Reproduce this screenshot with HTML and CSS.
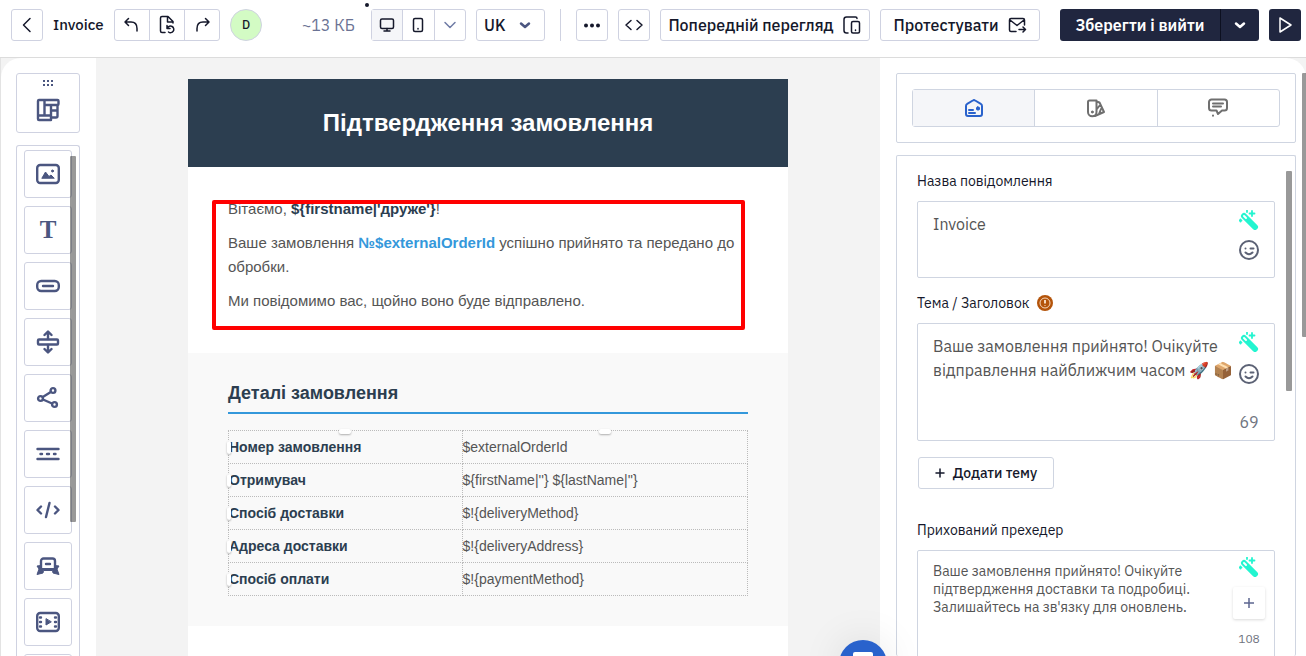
FILE: index.html
```
<!DOCTYPE html>
<html lang="uk">
<head>
  <meta charset="UTF-8">
  <meta name="viewport" content="width=device-width, initial-scale=1">
  <title>Invoice</title>
  <link rel="stylesheet" href="styles.css">
</head>
<body>

<header class="topbar">
  <button class="btn btn-icon" type="button" aria-label="Назад">
    <svg class="icon" viewBox="0 0 20 20"><path d="M13 3.5 6.500 10l6.500 6.500"/></svg>
  </button>
  <h1 class="doc-name">Invoice</h1>

  <div class="btn-group history">
    <button type="button" aria-label="Скасувати">
      <svg class="icon" viewBox="0 0 20 20"><path d="M6.500 3.500 3 7l3.500 3.500M3.500 7H9c4 0 6 2.500 6 6.500V16"/></svg>
    </button>
    <button type="button" aria-label="Версії">
      <svg class="icon" viewBox="0 0 20 20"><path d="M8 17.500H5A1.500 1.500 0 0 1 3.500 16V3A1.500 1.500 0 0 1 5 1.500h6l5 5V8M10.500 2v5H16M10 10.500v3h3M10.500 13a3.300 3.300 0 1 1 1 4"/></svg>
    </button>
    <button type="button" aria-label="Повторити">
      <svg class="icon" viewBox="0 0 20 20"><path d="M13.500 3.500 17 7l-3.500 3.500M16.500 7H11c-4 0-6 2.500-6 6.500V16"/></svg>
    </button>
  </div>

  <span class="avatar">D</span>
  <span class="size">~13 КБ</span>

  <div class="btn-group devices">
    <button class="active" type="button" aria-label="Комп'ютер">
      <svg class="icon icon-sm" viewBox="0 0 16 16"><rect x="1.500" y="2" width="13" height="9.500" rx="1.500"/><path d="M8 11.500V14M5 14h6"/></svg>
    </button>
    <button type="button" aria-label="Телефон">
      <svg class="icon icon-sm" viewBox="0 0 16 16"><rect x="3.500" y="1.500" width="9" height="13" rx="1.500"/><path d="M8 11.500v.5"/></svg>
    </button>
    <button class="muted" type="button" aria-label="Інші пристрої">
      <svg class="icon icon-sm" viewBox="0 0 16 16"><path d="m3 5.500 5 5 5-5"/></svg>
    </button>
  </div>

  <div class="lang">
    <select aria-label="Мова">
      <option>UK</option>
      <option>EN</option>
    </select>
    <svg class="icon-bold icon-sm" viewBox="0 0 16 16"><path d="m4 6.500 4 3.500 4-3.500"/></svg>
  </div>

  <span class="divider"></span>

  <button class="btn btn-icon" type="button" aria-label="Більше">
    <svg class="icon-fill" viewBox="0 0 20 20"><circle cx="4" cy="10.500" r="2"/><circle cx="10" cy="10.500" r="2"/><circle cx="16" cy="10.500" r="2"/></svg>
  </button>
  <button class="btn btn-icon" type="button" aria-label="Код">
    <svg class="icon" viewBox="0 0 20 20"><path d="m7 5.500-5 4.500 5 4.500M13 5.500l5 4.500-5 4.500"/></svg>
  </button>
  <button class="btn btn-preview" type="button">
    Попередній перегляд
    <svg class="icon" viewBox="0 0 20 20"><path d="M6 18H4.500A2.500 2.500 0 0 1 2 15.500v-11A2.500 2.500 0 0 1 4.500 2h9A1.500 1.500 0 0 1 15 3.500"/><rect x="9.500" y="6.500" width="8" height="11.500" rx="1.500"/><path d="M13.500 15v.5"/></svg>
  </button>
  <button class="btn btn-test" type="button">
    Протестувати
    <svg class="icon" viewBox="0 0 20 20"><path d="M9 16.500H4A1.500 1.500 0 0 1 2.500 15V5A1.500 1.500 0 0 1 4 3.500h12A1.500 1.500 0 0 1 17.500 5v5M3 5l7 5.500L17 5M12 14.500h6.500M16 12l2.500 2.500L16 17"/></svg>
  </button>

  <div class="save-group">
    <button class="save" type="button">Зберегти і вийти</button>
    <button class="save-more" type="button" aria-label="Інші дії">
      <svg class="icon-bold icon-sm" viewBox="0 0 16 16"><path d="m4 6.500 4 3.500 4-3.500"/></svg>
    </button>
  </div>
  <button class="play" type="button" aria-label="Запустити">
    <svg class="icon" viewBox="0 0 20 20"><path d="M5 3v14l11-7z"/></svg>
  </button>
  <span class="cursor-dot"></span>
</header>

<div class="workspace">
  <aside class="blocks">
    <button class="modules" type="button" aria-label="Модулі">
      <svg class="grip" viewBox="0 0 12 6"><path d="M1 0h2v2H1zM5 0h2v2H5zM9 0h2v2H9zM1 4h2v2H1zM5 4h2v2H5zM9 4h2v2H9z"/></svg>
      <svg class="icon-block" viewBox="0 0 24 24"><path d="M3 2h18.500a1 1 0 0 1 1 1v3a1 1 0 0 1-1 1H8.500M8.500 2v15M3 2a1 1 0 0 0-1 1v18a1 1 0 0 0 1 1h12v-4.500H2M15 7v10.500M15 12.500h6.500M21.500 7v11a1.500 1.500 0 0 1-1.500 1.500h-5"/></svg>
    </button>

    <div class="block-list">
      <button class="block" type="button" aria-label="Зображення">
        <svg class="icon-block" viewBox="0 0 24 24"><rect x="1.200" y="3" width="21.600" height="18" rx="3"/><path class="solid" d="M6 16 9.500 10l3.500 4.500 2-1.500 3 3z"/><circle class="solid" cx="16.500" cy="9" r="1"/></svg>
      </button>
      <button class="block block-text" type="button">T</button>
      <button class="block" type="button" aria-label="Кнопка">
        <svg class="icon-block" viewBox="0 0 24 24"><rect x="1.200" y="7" width="21.600" height="10" rx="4"/><path d="M7 12h10"/></svg>
      </button>
      <button class="block" type="button" aria-label="Відступ">
        <svg class="icon-block" viewBox="0 0 24 24"><rect x="2" y="9.500" width="20" height="5" rx="1"/><path d="M12 9V2M8.500 5 12 1.500 15.500 5M12 15v7M8.500 19l3.500 3.500 3.500-3.500"/></svg>
      </button>
      <button class="block" type="button" aria-label="Соцмережі">
        <svg class="icon-block" viewBox="0 0 24 24"><circle cx="4.500" cy="12.500" r="2.400"/><circle cx="17" cy="4.500" r="2.400"/><circle cx="18.500" cy="18.500" r="2.400"/><path d="m6.800 11 8-5M7 13.500l9 4"/></svg>
      </button>
      <button class="block" type="button" aria-label="Розділювач">
        <svg class="icon-block" viewBox="0 0 24 24"><path d="M1.500 7h21M1.500 17h21M4.500 12h1.500M11 12h2M18 12h1.500"/></svg>
      </button>
      <button class="block" type="button" aria-label="HTML">
        <svg class="icon-block" viewBox="0 0 24 24"><path d="m5 8.500-3.500 3.500L5 15.500M19 8.500l3.500 3.500-3.500 3.500M13.500 5l-3.500 14"/></svg>
      </button>
      <button class="block" type="button" aria-label="Банер">
        <svg class="icon-block" viewBox="0 0 24 24"><path d="M5 15V7a2.500 2.500 0 0 1 2.500-2.500h9A2.500 2.500 0 0 1 19 7v8M10 10h4"/><path class="solid" d="M5 11.500 1 12l2 3-2 5.500 6-1.500.5-2.500h9l.5 2.500 6 1.500-2-5.500 2-3-4-.5v3H5z"/></svg>
      </button>
      <button class="block" type="button" aria-label="Відео">
        <svg class="icon-block" viewBox="0 0 24 24"><rect x="1.200" y="3" width="21.600" height="18" rx="3"/><path d="M4 7.500h1M4 12h1M4 16.500h1M19 7.500h1M19 12h1M19 16.500h1"/><path class="solid" d="M10 9v6l5-3z"/></svg>
      </button>
      <button class="block" type="button" aria-label="Таймер"></button>
      <span class="scroll scroll-blocks"></span>
    </div>
  </aside>

  <main class="canvas">
    <article class="mail">
      <h2 class="mail-title">Підтвердження замовлення</h2>
      <section class="greeting">
        <p>Вітаємо, <b>${firstname|'друже'}</b>!</p>
        <p>Ваше замовлення <b class="order-id">№$externalOrderId</b> успішно прийнято та передано до обробки.</p>
        <p>Ми повідомимо вас, щойно воно буде відправлено.</p>
        <span class="highlight"></span>
      </section>
      <section class="details">
        <h3>Деталі замовлення</h3>
        <table>
          <tr><th scope="row"><span class="handle-col"></span><span class="handle-row"></span>Номер замовлення</th><td><span class="handle-col"></span>$externalOrderId</td></tr>
          <tr><th scope="row"><span class="handle-row"></span>Отримувач</th><td>${firstName|''} ${lastName|''}</td></tr>
          <tr><th scope="row"><span class="handle-row"></span>Спосіб доставки</th><td>$!{deliveryMethod}</td></tr>
          <tr><th scope="row"><span class="handle-row"></span>Адреса доставки</th><td>$!{deliveryAddress}</td></tr>
          <tr><th scope="row"><span class="handle-row"></span>Спосіб оплати</th><td>$!{paymentMethod}</td></tr>
        </table>
      </section>
    </article>
  </main>

  <aside class="settings">
    <div class="panel tabs-panel">
      <div class="tabs">
        <button class="tab active" type="button" aria-label="Лист">
          <svg class="icon-tab" viewBox="0 0 20 20"><path d="M2 8c0-1 .3-1.700 1.200-2.200L8.800 2.500c.8-.5 1.600-.5 2.400 0l5.600 3.300C17.700 6.300 18 7 18 8v8a2 2 0 0 1-2 2H4a2 2 0 0 1-2-2zM5 12h4M5 15h6"/><rect class="solid" x="12.500" y="9" width="3" height="3" rx="1"/></svg>
        </button>
        <button class="tab" type="button" aria-label="Стилі">
          <svg class="icon-tab" viewBox="0 0 20 20"><path d="M2 4a1.500 1.500 0 0 1 1.500-1.500h7V14a4 4 0 0 1-8.500 0zM10.500 3.500l3 1 4.500 9.500-9 4M10.500 11.500l4-5M13 16l2-5"/><circle class="solid" cx="6.300" cy="14" r="1"/></svg>
        </button>
        <button class="tab" type="button" aria-label="Коментарі">
          <svg class="icon-tab" viewBox="0 0 20 20"><path d="M3.500 1.500h13a2.500 2.500 0 0 1 2.500 2.500v6a2.500 2.500 0 0 1-2.500 2.500H14l-4 3.500-1.500-3.500h-5A2.500 2.500 0 0 1 1 10V4a2.500 2.500 0 0 1 2.500-2.500zM5 5.500h10M5 8.500h8M5 17.500v.2"/></svg>
        </button>
      </div>
    </div>

    <div class="panel form-panel">
      <label class="label" for="name">Назва повідомлення</label>
      <div class="field field-name">
        <textarea id="name">Invoice</textarea>
        <div class="tools">
          <button type="button" aria-label="Згенерувати"><svg class="wand" viewBox="0 0 20 20"><path class="stick" d="m5 6 11 11"/><path class="tip" d="m5 6 2 2"/><path class="stars" d="M13 1v5M10.500 3.500h5M8 .5v1.500M1.500 9.500v2M.5 10.500h2"/></svg></button>
          <button type="button" aria-label="Емодзі"><svg class="smile" viewBox="0 0 20 20"><circle cx="10" cy="10" r="9"/><path d="M6.500 8.500v.1M11.500 8.500h3M6.500 12.500q3.500 3.500 7 0"/></svg></button>
        </div>
      </div>

      <label class="label" for="subject">Тема / Заголовок
        <svg class="warn" viewBox="0 0 16 16"><circle class="disc" cx="8" cy="8" r="8"/><circle class="ring" cx="8" cy="8" r="5"/><path class="mark" d="M8 5v3.500M8 10.500v.5"/></svg>
      </label>
      <div class="field field-subject">
        <textarea id="subject">Ваше замовлення прийнято! Очікуйте відправлення найближчим часом 🚀 📦</textarea>
        <div class="tools">
          <button type="button" aria-label="Згенерувати"><svg class="wand" viewBox="0 0 20 20"><path class="stick" d="m5 6 11 11"/><path class="tip" d="m5 6 2 2"/><path class="stars" d="M13 1v5M10.500 3.500h5M8 .5v1.500M1.500 9.500v2M.5 10.500h2"/></svg></button>
          <button type="button" aria-label="Емодзі"><svg class="smile" viewBox="0 0 20 20"><circle cx="10" cy="10" r="9"/><path d="M6.500 8.500v.1M11.500 8.500h3M6.500 12.500q3.500 3.500 7 0"/></svg></button>
          <span class="counter">69</span>
        </div>
      </div>

      <button class="btn add-subject" type="button">
        <svg class="icon plus" viewBox="0 0 10 10"><path d="M5 1v8M1 5h8"/></svg>
        Додати тему
      </button>

      <label class="label" for="preheader">Прихований прехедер</label>
      <div class="field field-preheader">
        <textarea id="preheader">Ваше замовлення прийнято! Очікуйте підтвердження доставки та подробиці. Залишайтесь на зв'язку для оновлень.</textarea>
        <div class="tools">
          <button type="button" aria-label="Згенерувати"><svg class="wand" viewBox="0 0 20 20"><path class="stick" d="m5 6 11 11"/><path class="tip" d="m5 6 2 2"/><path class="stars" d="M13 1v5M10.500 3.500h5M8 .5v1.500M1.500 9.500v2M.5 10.500h2"/></svg></button>
          <button class="add" type="button" aria-label="Додати"><svg class="plus" viewBox="0 0 10 10"><path d="M5 0v10M0 5h10"/></svg></button>
          <span class="counter">108</span>
        </div>
      </div>
      <span class="scroll scroll-form"></span>
    </div>
    <span class="scroll scroll-page"></span>
  </aside>
</div>

<button class="chat" type="button" aria-label="Чат"><span class="chat-icon"></span></button>

</body>
</html>
```
FILE: styles.css
```
* {
  box-sizing: border-box;
  margin: 0;
  padding: 0;
}

body {
  height: 100vh;
  display: flex;
  flex-direction: column;
  overflow: hidden;
  background: #f3f3f3;
  color: #15182b;
  font-family: "IBM Plex Sans", "Noto Sans", sans-serif;
  font-size: 16px;
}

button {
  display: flex;
  justify-content: center;
  align-items: center;
  border: none;
  background: none;
  color: inherit;
  font: inherit;
  cursor: pointer;
}

svg {
  flex: none;
}

/* icons */
.icon,
.icon-bold,
.icon-block,
.icon-tab {
  fill: none;
  stroke: currentColor;
  stroke-width: 1.5;
  stroke-linecap: round;
  stroke-linejoin: round;
}

.icon,
.icon-fill,
.icon-tab {
  width: 20px;
  height: 20px;
}

.icon-fill {
  fill: currentColor;
}

.icon-sm {
  width: 16px;
  height: 16px;
}

.icon-bold {
  stroke-width: 2.5;
}

.icon-block {
  width: 24px;
  height: 24px;
  stroke-width: 2.4;
}

.icon-tab {
  stroke-width: 2;
}

.solid {
  fill: currentColor;
  stroke-width: 1;
}

/* top bar */
.topbar {
  position: relative;
  flex: none;
  display: flex;
  align-items: center;
  gap: 10px;
  height: 58px;
  padding: 0 5px 8px 11px;
  border-bottom: 1px solid #dcdcdc;
  background: #fff;
  white-space: nowrap;
}

.btn {
  height: 32px;
  border: 1px solid #cfd2e1;
  border-radius: 3px;
  background: #fff;
  font-weight: 500;
}

.btn-icon {
  width: 32px;
}

.btn-preview {
  width: 210px;
  gap: 8px;
}

.btn-test {
  width: 160px;
  gap: 8px;
}

.doc-name {
  width: 51px;
  font-size: 15px;
  font-weight: 500;
}

.btn-group {
  display: flex;
  height: 32px;
  border: 1px solid #cfd2e1;
  border-radius: 3px;
}

.btn-group button {
  flex: 1;
}

.btn-group button + button {
  border-left: 1px solid #cfd2e1;
}

.history {
  width: 106px;
}

.devices {
  width: 95px;
}

.btn-group .active {
  background: #f5f6f9;
}

.btn-group .muted {
  color: #6f7ba5;
}

.avatar {
  display: flex;
  justify-content: center;
  align-items: center;
  width: 32px;
  height: 32px;
  border: 1px solid #cfd2e1;
  border-radius: 50%;
  background: #d3fbc4;
  font-size: 12px;
  font-weight: 500;
}

.size {
  flex: 1;
  padding-right: 6px;
  color: #6b7394;
  text-align: right;
}

.lang {
  display: grid;
  align-items: center;
  width: 69px;
  height: 32px;
}

.lang select {
  grid-area: 1 / 1;
  height: 100%;
  padding-left: 7px;
  border: 1px solid #cfd2e1;
  border-radius: 3px;
  background: #fff;
  color: inherit;
  font: inherit;
  font-weight: 500;
  appearance: none;
}

.lang svg {
  grid-area: 1 / 1;
  justify-self: end;
  margin-right: 12px;
  color: #4b5680;
  pointer-events: none;
}

.divider {
  width: 1px;
  height: 32px;
  margin: 0 5px;
  background: #cfd2e1;
}

.save-group {
  display: flex;
  height: 32px;
  margin-left: 10px;
}

.save,
.save-more,
.play {
  height: 32px;
  border-radius: 3px;
  background: #20263f;
  color: #fff;
}

.save {
  width: 160px;
  border-radius: 3px 0 0 3px;
  font-weight: 600;
}

.save-more {
  width: 39px;
  border-left: 1px solid #0c1020;
  border-radius: 0 3px 3px 0;
}

.play {
  width: 32px;
}

.cursor-dot {
  position: absolute;
  left: 365px;
  top: 3px;
  width: 4px;
  height: 4px;
  border-radius: 50%;
  background: #15182b;
}

/* workspace */
.workspace {
  flex: 1;
  display: flex;
  min-height: 0;
  border-left: 1px solid #e3e3e3;
}

.blocks {
  flex: none;
  display: flex;
  flex-direction: column;
  gap: 12px;
  width: 95px;
  padding: 15px 16px 0 15px;
  border-top-left-radius: 20px;
  background: #fff;
  color: #4b5680;
}

.modules {
  flex: none;
  flex-direction: column;
  gap: 12px;
  height: 60px;
  padding-bottom: 4px;
  border: 1px solid #cfd2e1;
  border-radius: 3px;
}

.grip {
  width: 12px;
  height: 6px;
  fill: currentColor;
}

.block-list {
  position: relative;
  flex: 1;
  display: flex;
  flex-direction: column;
  gap: 8px;
  min-height: 0;
  padding: 4px 7px 0;
  overflow: hidden;
  border: 1px solid #cfd2e1;
  border-bottom: none;
  border-radius: 3px 3px 0 0;
}

.block {
  flex: none;
  width: 48px;
  height: 48px;
  border: 1px solid #cfd2e1;
  border-radius: 3px;
}

.block-text {
  font-family: "Liberation Serif", serif;
  font-size: 25px;
  font-weight: bold;
}

.scroll {
  position: absolute;
  width: 6px;
  border-radius: 1px;
  background: rgba(0, 0, 0, 0.4);
}

.scroll-blocks {
  top: 10px;
  right: 3px;
  height: 366px;
}

/* mail */
.canvas {
  flex: 1;
  padding: 21px 16px 0;
  overflow: hidden;
}

.mail {
  max-width: 600px;
  min-height: 100%;
  margin: 0 auto;
  background: #fff;
  color: #555;
  font-family: Arial, "Liberation Sans", sans-serif;
  font-size: 15px;
  line-height: 24px;
}

.mail b,
.mail th,
.mail h3 {
  color: #2c3e50;
}

.mail-title {
  padding: 30px;
  background: #2c3e50;
  color: #fff;
  font-size: 24px;
  line-height: 28px;
  text-align: center;
}

.greeting {
  position: relative;
  padding: 30px 40px 40px;
}

.greeting p + p {
  margin-top: 10px;
}

.greeting .order-id {
  color: #3498db;
}

.highlight {
  position: absolute;
  top: 33px;
  right: 43px;
  bottom: 23px;
  left: 24px;
  border: 4px solid #f00;
  border-radius: 2px;
}

.details {
  padding: 30px 40px;
  background: #f9f9f9;
}

.details h3 {
  margin-bottom: 16px;
  padding-bottom: 8px;
  border-bottom: 2px solid #3498db;
  font-size: 18px;
  line-height: 21px;
}

.details table {
  width: 100%;
  border-collapse: collapse;
  font-size: 14px;
  line-height: 22px;
}

.details th,
.details td {
  position: relative;
  height: 33px;
  border: 1px dotted #bbb;
  text-align: left;
}

.details th {
  width: 45%;
}

.handle-col,
.handle-row {
  position: absolute;
  border-radius: 2px;
  background: #fff;
  box-shadow: 0 1px 2px rgba(0, 0, 0, 0.3);
}

.handle-col {
  top: -2px;
  left: 50%;
  width: 12px;
  height: 5px;
  margin-left: -6px;
}

.handle-row {
  top: 10px;
  left: -2px;
  width: 4px;
  height: 13px;
}

/* settings */
.settings {
  position: relative;
  flex: none;
  display: flex;
  flex-direction: column;
  gap: 12px;
  width: 426px;
  padding: 15px 10px 0 16px;
  border-top-right-radius: 20px;
  background: #fff;
}

.panel {
  border: 1px solid #cfd5e1;
  border-radius: 2px;
}

.tabs-panel {
  flex: none;
  padding: 15px;
}

.tabs {
  display: flex;
  height: 38px;
  border: 1px solid #cfd5e1;
  border-radius: 3px;
}

.tab {
  flex: 1;
  color: #6f6f6f;
}

.tab + .tab {
  border-left: 1px solid #cfd5e1;
}

.tab.active {
  background: #f5f6f9;
  color: #2962cc;
}

.form-panel {
  position: relative;
  flex: 1;
  min-height: 0;
  padding: 15px 20px 0;
  overflow: hidden;
  border-bottom: none;
}

.label {
  display: flex;
  align-items: center;
  gap: 8px;
  height: 20px;
  margin-bottom: 10px;
  font-size: 14px;
}

.warn {
  width: 16px;
  height: 16px;
  fill: none;
  stroke: #f6d9c0;
  stroke-width: 1;
}

.warn .disc {
  fill: #b4540a;
  stroke: none;
}

.warn .mark {
  stroke-width: 2;
}

.field {
  display: flex;
  margin-bottom: 15px;
  border: 1px solid #cfd5e1;
  border-radius: 2px;
}

.field textarea {
  flex: 1;
  min-width: 0;
  padding: 10px 0 0 15px;
  border: none;
  outline: none;
  background: none;
  color: #555;
  font: inherit;
  line-height: 24px;
  overflow: hidden;
  resize: none;
}

.field-name {
  height: 77px;
}

.field-subject {
  height: 118px;
  margin-bottom: 16px;
}

.field-preheader {
  height: 118px;
}

.field .tools {
  flex: none;
  display: flex;
  flex-direction: column;
  align-items: center;
  gap: 10px;
  width: 24px;
  padding: 8px 0;
  margin-right: 13px;
}

.field-subject .tools {
  gap: 12px;
}

.field-preheader .tools {
  padding-top: 6px;
}

.field-preheader textarea {
  padding: 11px 24px 0 15px;
  font-size: 14px;
  line-height: 18px;
}

.counter {
  margin-top: auto;
  color: #6f7480;
}

.field-preheader .counter {
  margin-top: 2px;
  font-size: 12px;
}

.wand,
.smile {
  display: block;
  width: 20px;
  height: 20px;
  fill: none;
  stroke-linecap: round;
}

.wand {
  stroke: #23f5d0;
}

.wand .stick {
  stroke-width: 6;
}

.wand .tip {
  stroke: #fff;
  stroke-width: 2;
}

.wand .stars {
  stroke-width: 1.8;
}

.smile {
  stroke: #5c6275;
  stroke-width: 2;
}

.plus {
  width: 10px;
  height: 10px;
}

.add-subject {
  gap: 8px;
  width: 136px;
  margin: 0 0 31px 1px;
  border-color: #cfd5e1;
  font-size: 14px;
}

.add {
  width: 32px;
  height: 32px;
  flex: none;
  border-radius: 2px;
  background: #fff;
  box-shadow: 0 1px 3px rgba(0, 0, 0, 0.15);
}

.add .plus {
  stroke: #5c6690;
  stroke-width: 1.5;
}

.scroll-form {
  top: 15px;
  right: 3px;
  height: 220px;
}

.scroll-page {
  top: 15px;
  right: -2px;
  height: 264px;
}

/* chat */
.chat {
  position: fixed;
  right: 419px;
  bottom: -32px;
  width: 48px;
  height: 48px;
  border-radius: 50%;
  background: #2962cc;
  box-shadow: 0 0 40px rgba(0, 0, 0, 0.1);
}

.chat-icon {
  width: 20px;
  height: 24px;
  border-radius: 2px;
  background: #fff;
}
```
